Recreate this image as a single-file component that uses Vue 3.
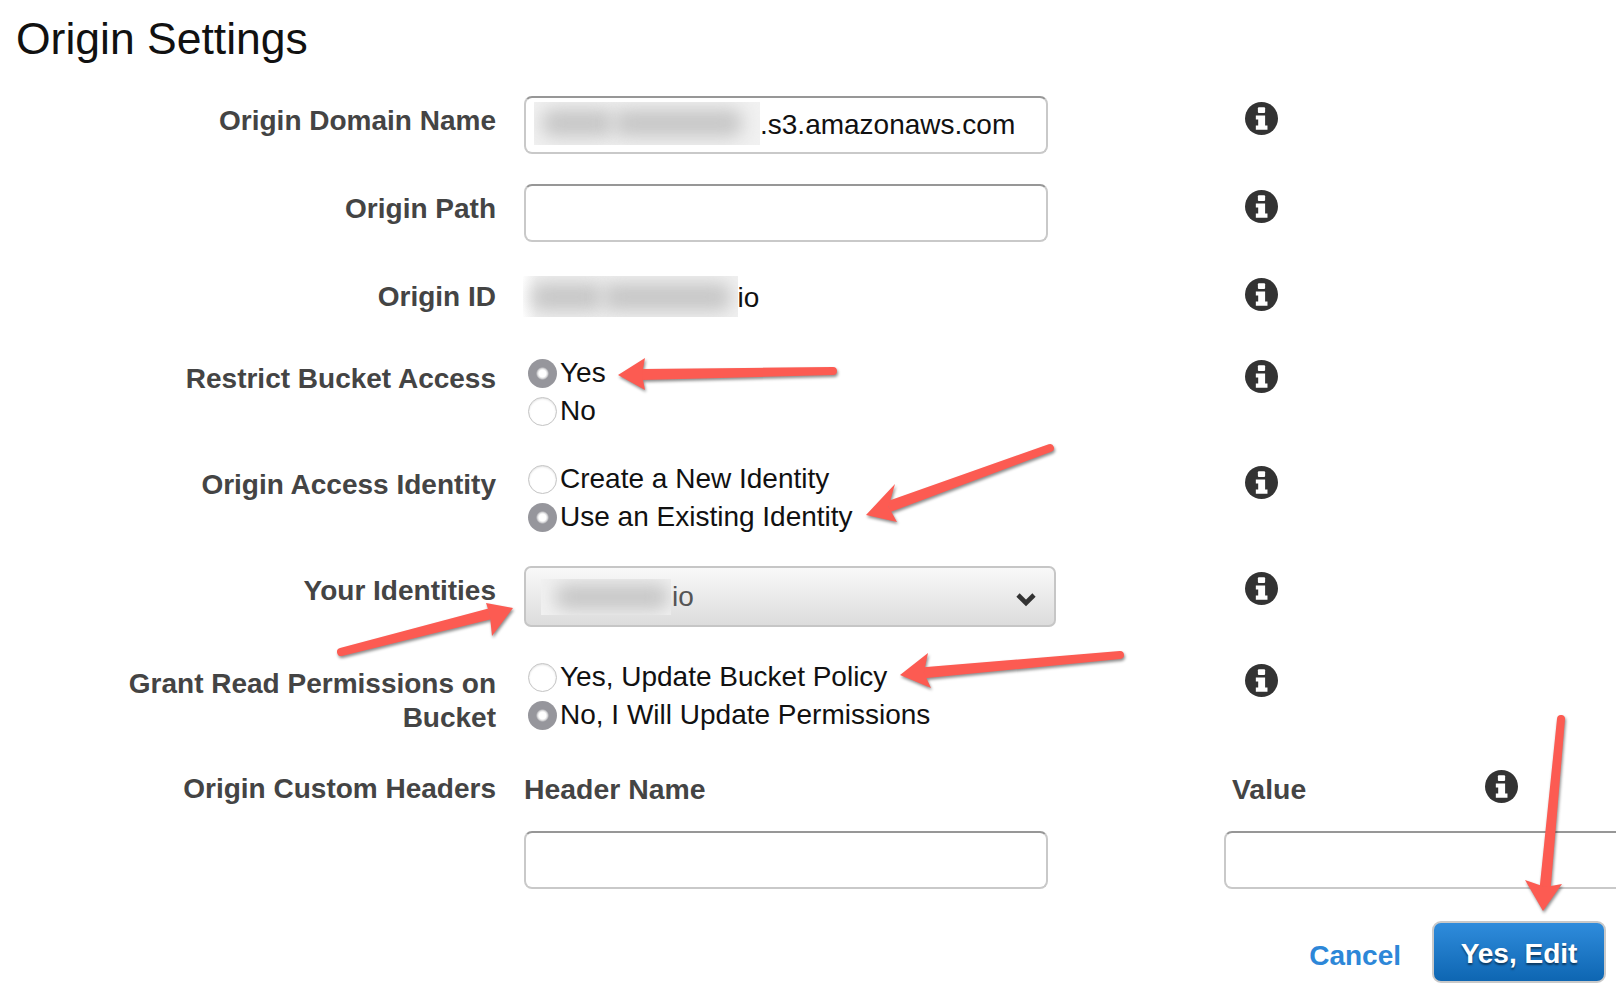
<template>
  <div class="page">
    <h1 class="title">Origin Settings</h1>

    <div class="row row-input">
      <label class="label">Origin Domain Name</label>
      <div class="field text-input">
        <span class="smudge smudge-domain"><i class="blob blob-a"></i><i class="blob blob-b"></i></span>
        <span>.s3.amazonaws.com</span>
      </div>
      <InfoIcon />
    </div>

    <div class="row row-input">
      <label class="label">Origin Path</label>
      <div class="field text-input"></div>
      <InfoIcon />
    </div>

    <div class="row row-id">
      <label class="label">Origin ID</label>
      <div class="plain-value">
        <span class="smudge smudge-id"><i class="blob blob-a"></i><i class="blob blob-b"></i></span>
        <span>io</span>
      </div>
      <InfoIcon />
    </div>

    <div v-for="group in radioGroups" :key="group.label" class="row" :class="group.rowClass">
      <label class="label">{{ group.label }}</label>
      <div class="radios">
        <div v-for="opt in group.options" :key="opt.text" class="radio-line">
          <input type="radio" class="radio" :name="group.label" :checked="opt.checked" />
          <span>{{ opt.text }}</span>
        </div>
      </div>
      <InfoIcon />
    </div>

    <div class="row row-select">
      <label class="label">Your Identities</label>
      <div class="select-box">
        <span class="smudge smudge-select"><i class="blob blob-c"></i></span>
        <span class="select-text">io</span>
        <svg class="chevron" viewBox="0 0 22 16" width="22" height="16">
          <path d="M3 4 L11 12 L19 4" fill="none" stroke="#333" stroke-width="4.6" />
        </svg>
      </div>
      <InfoIcon />
    </div>

    <div class="row row-radio row-grant">
      <label class="label label-tight">{{ grant.label }}</label>
      <div class="radios">
        <div v-for="opt in grant.options" :key="opt.text" class="radio-line">
          <input type="radio" class="radio" :name="grant.label" :checked="opt.checked" />
          <span>{{ opt.text }}</span>
        </div>
      </div>
      <InfoIcon />
    </div>

    <div class="headers">
      <label class="label label-flat">Origin Custom Headers</label>
      <div class="col-title">Header Name</div>
      <div class="value-head">
        <span class="col-title">Value</span>
        <InfoIcon />
      </div>
      <div></div>
      <div class="field text-input short"></div>
      <div class="field text-input value-input"></div>
    </div>

    <div class="actions">
      <a class="cancel">Cancel</a>
      <button class="primary">Yes, Edit</button>
    </div>

    <!-- annotation arrows on top of the form -->
    <svg class="arrows" width="1616" height="998" viewBox="0 0 1616 998">
      <g v-for="(a, i) in arrows" :key="i">
        <path :d="a.shaft" fill="#fc5b52" />
        <polygon :points="a.head" fill="#fc5b52" />
      </g>
    </svg>
  </div>
</template>

<script setup>
import { h } from 'vue'

const InfoIcon = () =>
  h('svg', { class: 'info', viewBox: '0 0 32 32', width: 33, height: 33, style: 'margin-top:6px;display:block' }, [
    h('circle', { cx: 16, cy: 16, r: 16, fill: '#333' }),
    h('rect', { x: 12.5, y: 5, width: 7, height: 5.6, rx: 1, fill: '#fff' }),
    h('path', { d: 'M10.5 13 H19.5 V22.8 H21.8 V27 H10.5 V22.8 H12.8 V17 H10.5 Z', fill: '#fff' })
  ])

const radioGroups = [
  {
    label: 'Restrict Bucket Access',
    rowClass: 'row-radio',
    options: [{ text: 'Yes', checked: true }, { text: 'No', checked: false }]
  },
  {
    label: 'Origin Access Identity',
    rowClass: 'row-radio',
    options: [{ text: 'Create a New Identity', checked: false }, { text: 'Use an Existing Identity', checked: true }]
  }
]

const grant = {
  label: 'Grant Read Permissions on Bucket',
  options: [{ text: 'Yes, Update Bucket Policy', checked: false }, { text: 'No, I Will Update Permissions', checked: true }]
}

// tail, tip, two wings, all in page pixels
const makeArrow = (tail, tip, wingA, wingB) => {
  const dx = tip[0] - tail[0]
  const dy = tip[1] - tail[1]
  const len = Math.hypot(dx, dy)
  const ux = dx / len
  const uy = dy / len
  const nx = -uy
  const ny = ux
  const neck = [tip[0] - ux * 24, tip[1] - uy * 24]
  const tw = 4
  const nw = 5.5
  const shaft = `M${tail[0] + nx * tw} ${tail[1] + ny * tw} L${neck[0] + nx * nw} ${neck[1] + ny * nw} L${neck[0] - nx * nw} ${neck[1] - ny * nw} L${tail[0] - nx * tw} ${tail[1] - ny * tw} A${tw} ${tw} 0 0 0 ${tail[0] + nx * tw} ${tail[1] + ny * tw} Z`
  const head = [tip, wingA, neck, wingB].map((p) => p.join(',')).join(' ')
  return { shaft, head }
}

const arrows = [
  makeArrow([833, 371], [618, 375], [645, 358], [645, 390]),
  makeArrow([1050, 448], [866, 515], [895, 484], [897, 522]),
  makeArrow([341, 652], [513, 608], [486, 603], [492, 636]),
  makeArrow([1120, 655], [900, 675], [928, 653], [931, 688]),
  makeArrow([1561, 719], [1543, 911], [1525, 880], [1562, 884])
]
</script>

<style scoped>
.page {
  position: relative;
  width: 1616px;
  height: 998px;
  overflow: hidden;
  background: #fff;
  font-family: "Liberation Sans", Arial, sans-serif;
  font-size: 28px;
  color: #111;
}

.title {
  margin: 0;
  padding: 13px 0 0 16px;
  height: 96px;
  box-sizing: border-box;
  font-size: 44.5px;
  line-height: 52px;
  font-weight: 400;
  color: #111;
}

.row {
  display: grid;
  grid-template-columns: 524px 721px 1fr;
  align-items: start;
}
.row-input { height: 58px; margin-bottom: 30px; }
.row-id { height: 44px; margin-bottom: 38px; }
.row-radio { height: 76px; margin-bottom: 30px; }
.row-select { height: 61px; margin-bottom: 31px; }
.row-grant { height: 76px; margin-bottom: 36px; }

.label {
  padding: 6px 28px 0 0;
  text-align: right;
  font-weight: 700;
  font-size: 28px;
  line-height: 38px;
  color: #444;
}
.label-tight { padding: 9px 28px 0 100px; line-height: 34px; }
.label-flat { padding-top: 0; }

.field {
  box-sizing: border-box;
  height: 58px;
  width: 524px;
}
.text-input {
  display: flex;
  align-items: center;
  padding: 0 8px;
  background: #fff;
  border: 2px solid #c9c9c9;
  border-top-color: #979797;
  border-radius: 8px;
}

.smudge {
  position: relative;
  display: block;
  flex: none;
  overflow: hidden;
  background: #f1f1f1;
}
.smudge-domain { width: 226px; height: 43px; margin-top: -4px; }
.smudge-id {
  width: 215px;
  height: 41px;
  margin-left: -1.5px;
  background: linear-gradient(90deg, #fff, #f1f1f1 14px);
}
.smudge-select { width: 130px; height: 36px; }
.blob {
  position: absolute;
  top: 7px;
  height: 28px;
  background: #c6c6c6;
  border-radius: 10px;
  filter: blur(9px);
}
.blob-a { left: 8px; width: 72px; }
.blob-b { left: 80px; width: 128px; }
.blob-c { left: 14px; top: 5px; width: 114px; height: 26px; }

.plain-value {
  display: flex;
  align-items: center;
  height: 44px;
  padding-top: 8px;
  box-sizing: border-box;
}
.plain-value .smudge { margin-top: -4px; }

.radio-line {
  display: flex;
  align-items: center;
  gap: 3px;
  height: 38px;
}
.radio {
  appearance: none;
  flex: none;
  box-sizing: border-box;
  width: 29px;
  height: 29px;
  margin: 0 0 0 4px;
  border-radius: 50%;
  background: #fff;
  border: 1.5px solid #c4c4c4;
  box-shadow: inset 0 1px 2px rgba(0, 0, 0, 0.12);
}
.radio:checked {
  border: none;
  box-shadow: none;
  background: radial-gradient(circle at center, #fff 0, #fff 3.5px, #d8d8da 5px, #96969c 6.5px);
}

.select-box {
  display: flex;
  align-items: center;
  box-sizing: border-box;
  width: 532px;
  height: 61px;
  padding: 1px 17px 0 15px;
  border: 2px solid #c6c6c6;
  border-radius: 7px;
  background: linear-gradient(#f9f9f9, #dcdcdc);
  color: #555;
}
.select-text { margin-left: 1px; }
.chevron { margin-left: auto; margin-top: 3px; }

.headers {
  display: grid;
  grid-template-columns: 524px 700px 500px;
  grid-template-rows: 42px 58px;
  row-gap: 19px;
}
.col-title {
  font-weight: 700;
  font-size: 28.4px;
  line-height: 38px;
  color: #444;
}
.value-head {
  display: flex;
  align-items: flex-start;
  padding-left: 8px;
}
.value-head .col-title { width: 253px; }
.value-head :deep(.info) { margin-top: 0 !important; }
.value-input { width: 500px; }

.actions {
  display: flex;
  justify-content: flex-end;
  align-items: center;
  gap: 31px;
  padding-right: 10px;
  margin-top: 32px;
}
.cancel {
  margin-top: 8px;
  color: #2d87d8;
  font-weight: 700;
}
.primary {
  box-sizing: border-box;
  width: 174px;
  height: 62px;
  padding-top: 4px;
  border: 2.5px solid #c9c9c9;
  border-radius: 9px;
  background: linear-gradient(#2f8cdc, #0e66b2);
  color: #fff;
  font-family: inherit;
  font-size: 28px;
  font-weight: 700;
  text-shadow: 0 2px 2px rgba(0, 0, 0, 0.5);
}

.arrows {
  position: absolute;
  left: 0;
  top: 0;
  pointer-events: none;
  filter: drop-shadow(1px 2px 1.5px rgba(0, 0, 0, 0.45));
}
</style>

<style>
html, body { margin: 0; overflow: hidden; background: #fff; }
</style>
